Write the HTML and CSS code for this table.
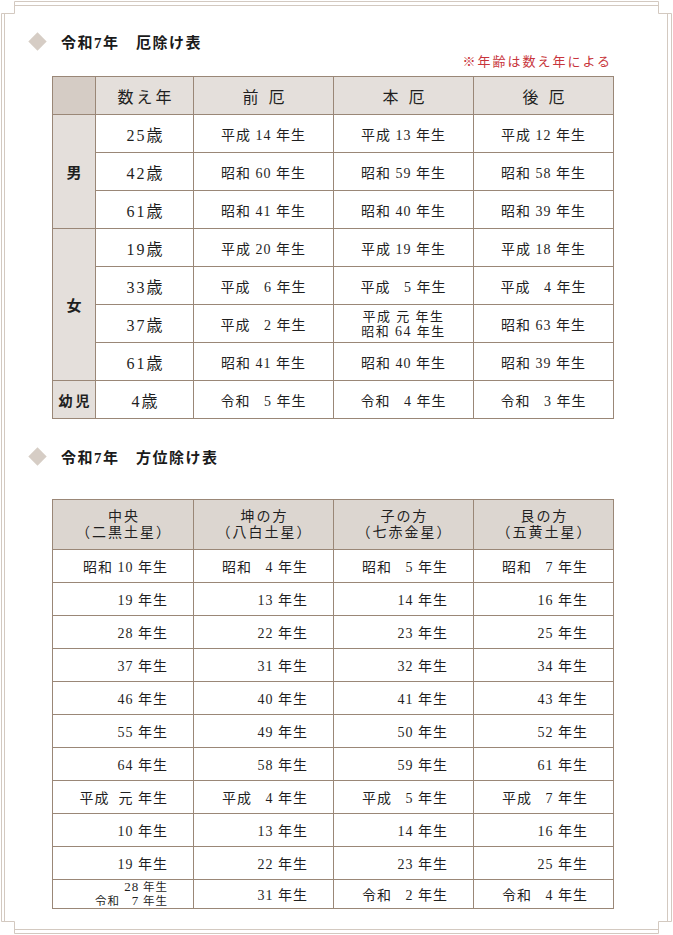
FILE: index.html
```html
<!DOCTYPE html>
<html lang="ja">
<head>
<meta charset="utf-8">
<title>令和7年 厄除け表・方位除け表</title>
<link rel="stylesheet" href="styles.css">
</head>
<body>
<div class="page">
  <svg class="frame" width="673" height="935" viewBox="0 0 673 935" aria-hidden="true">
    <path d="M14.5 1.5 H658.5 V13.5 H671.5 V921.5 H658.5 V933.5 H14.5 V921.5 H1.5 V13.5 H14.5 Z" />
    <path d="M14.5 5.5 H658.5 M4.5 13.5 V921.5 M667.5 13.5 V921.5 M14.5 929.5 H658.5" />
  </svg>

  <h2 class="heading"><span class="diamond"></span><span class="heading-text">令和7年　厄除け表</span></h2>
  <p class="note">※年齢は数え年による</p>

  <table class="yaku">
    <colgroup>
      <col class="c-side"><col class="c-age"><col class="c-y"><col class="c-y"><col class="c-y">
    </colgroup>
    <thead>
      <tr>
        <th class="corner"></th>
        <th><span class="h-age">数え年</span></th>
        <th><span class="h-wide">前厄</span></th>
        <th><span class="h-wide">本厄</span></th>
        <th><span class="h-wide">後厄</span></th>
      </tr>
    </thead>
    <tbody>
      <tr><td class="side" rowspan="3">男</td><td class="age">25歳</td><td>平成 14 年生</td><td>平成 13 年生</td><td>平成 12 年生</td></tr>
      <tr><td class="age">42歳</td><td>昭和 60 年生</td><td>昭和 59 年生</td><td>昭和 58 年生</td></tr>
      <tr><td class="age">61歳</td><td>昭和 41 年生</td><td>昭和 40 年生</td><td>昭和 39 年生</td></tr>
      <tr><td class="side" rowspan="4">女</td><td class="age">19歳</td><td>平成 20 年生</td><td>平成 19 年生</td><td>平成 18 年生</td></tr>
      <tr><td class="age">33歳</td><td>平成 &nbsp;&nbsp;6 年生</td><td>平成 &nbsp;&nbsp;5 年生</td><td>平成 &nbsp;&nbsp;4 年生</td></tr>
      <tr><td class="age">37歳</td><td>平成 &nbsp;&nbsp;2 年生</td><td class="two"><span class="l">平成 元 年生</span><span class="l">昭和 <span class="n">64</span> 年生</span></td><td>昭和 63 年生</td></tr>
      <tr><td class="age">61歳</td><td>昭和 41 年生</td><td>昭和 40 年生</td><td>昭和 39 年生</td></tr>
      <tr><td class="side small">幼児</td><td class="age">4歳</td><td>令和 &nbsp;&nbsp;5 年生</td><td>令和 &nbsp;&nbsp;4 年生</td><td>令和 &nbsp;&nbsp;3 年生</td></tr>
    </tbody>
  </table>

  <h2 class="heading second"><span class="diamond"></span><span class="heading-text">令和7年　方位除け表</span></h2>

  <table class="houi">
    <colgroup>
      <col class="c-h1"><col class="c-h"><col class="c-h"><col class="c-h">
    </colgroup>
    <thead>
      <tr>
        <th><span class="l">中央</span><span class="l paren">（二黒土星）</span></th>
        <th><span class="l">坤の方</span><span class="l paren">（八白土星）</span></th>
        <th><span class="l">子の方</span><span class="l paren">（七赤金星）</span></th>
        <th><span class="l">艮の方</span><span class="l paren">（五黄土星）</span></th>
      </tr>
    </thead>
    <tbody>
      <tr><td>昭和 10 年生</td><td>昭和 &nbsp;&nbsp;4 年生</td><td>昭和 &nbsp;&nbsp;5 年生</td><td>昭和 &nbsp;&nbsp;7 年生</td></tr>
      <tr><td>19 年生</td><td>13 年生</td><td>14 年生</td><td>16 年生</td></tr>
      <tr><td>28 年生</td><td>22 年生</td><td>23 年生</td><td>25 年生</td></tr>
      <tr><td>37 年生</td><td>31 年生</td><td>32 年生</td><td>34 年生</td></tr>
      <tr><td>46 年生</td><td>40 年生</td><td>41 年生</td><td>43 年生</td></tr>
      <tr><td>55 年生</td><td>49 年生</td><td>50 年生</td><td>52 年生</td></tr>
      <tr><td>64 年生</td><td>58 年生</td><td>59 年生</td><td>61 年生</td></tr>
      <tr><td>平成 &nbsp;元 年生</td><td>平成 &nbsp;&nbsp;4 年生</td><td>平成 &nbsp;&nbsp;5 年生</td><td>平成 &nbsp;&nbsp;7 年生</td></tr>
      <tr><td>10 年生</td><td>13 年生</td><td>14 年生</td><td>16 年生</td></tr>
      <tr><td>19 年生</td><td>22 年生</td><td>23 年生</td><td>25 年生</td></tr>
      <tr class="last"><td class="two"><span class="l"><span class="n">28</span> 年生</span><span class="l">令和 &nbsp;&nbsp;<span class="n">7</span> 年生</span></td><td>31 年生</td><td>令和 &nbsp;&nbsp;2 年生</td><td>令和 &nbsp;&nbsp;4 年生</td></tr>
    </tbody>
  </table>
</div>
</body>
</html>
```

FILE: styles.css
```css
html, body {
  margin: 0;
  padding: 0;
  background: #ffffff;
}

body {
  font-family: "Liberation Serif", "Noto Sans CJK JP", serif;
  color: #1f1f1f;
}

.page {
  position: relative;
  width: 673px;
  height: 935px;
  padding-top: 34px;
  box-sizing: border-box;
  overflow: hidden;
}

.frame {
  position: absolute;
  left: 0;
  top: 0;
  pointer-events: none;
}

.frame path {
  fill: none;
  stroke: #d3c9c0;
  stroke-width: 1;
}

.heading {
  display: flex;
  align-items: center;
  margin: 0;
  height: 18px;
  font-size: 15px;
  font-weight: bold;
  letter-spacing: 1.5px;
  line-height: 18px;
  color: #1a1a1a;
}

.heading.second {
  margin-top: 30px;
}

.diamond {
  width: 13px;
  height: 13px;
  margin-left: 31px;
  margin-right: 17px;
  margin-top: -3px;
  background: #d6cdc5;
  transform: rotate(45deg);
  flex: none;
}

.note {
  margin: 3px 0 0 0;
  width: 612px;
  text-align: right;
  font-size: 13px;
  line-height: 14px;
  letter-spacing: 2px;
  color: #c8353b;
}

table {
  border-collapse: collapse;
  table-layout: fixed;
  margin-left: 52px;
  width: 561px;
}

th, td {
  border: 1px solid #9a8777;
  padding: 0;
  font-weight: normal;
}

/* 厄除け表 */
.yaku {
  margin-top: 7px;
}

.yaku .c-side { width: 43px; }
.yaku .c-age { width: 98px; }
.yaku .c-y { width: 140px; }

.yaku tr {
  height: 38px;
}

.yaku th {
  background: #e4dfdb;
  font-size: 16px;
  text-align: center;
}

.yaku th.corner {
  background: #d5ccc5;
}

.h-age {
  letter-spacing: 3px;
  padding-left: 3px;
}

.h-wide {
  letter-spacing: 10px;
  padding-left: 10px;
}

.yaku td {
  text-align: center;
  font-size: 14px;
  letter-spacing: 1px;
}

.yaku td.side {
  background: #e4dfdb;
  font-size: 15px;
  font-weight: bold;
  letter-spacing: 0;
}

.yaku td.side.small {
  font-size: 14px;
  letter-spacing: 3px;
  padding-left: 3px;
}

.yaku td.age {
  font-size: 16px;
  letter-spacing: 2px;
  padding-left: 2px;
}

.yaku td.two {
  font-size: 13px;
  line-height: 15px;
  letter-spacing: 1.5px;
}

.l {
  display: block;
}

.n {
  font-size: 14px;
  line-height: 1;
}

/* 方位除け表 */
.houi {
  margin-top: 32px;
}

.houi .c-h1 { width: 141px; }
.houi .c-h { width: 140px; }

.houi thead tr {
  height: 50px;
}

.houi th {
  background: #dcd6d0;
  font-size: 14px;
  line-height: 16px;
  letter-spacing: 2px;
  text-align: center;
  padding-left: 2px;
}

.houi tbody tr {
  height: 33px;
}

.houi tbody tr.last {
  height: 28px;
}

.houi td {
  text-align: right;
  padding-right: 25px;
  font-size: 14px;
  letter-spacing: 1px;
}

.houi td.two {
  font-size: 11.5px;
  line-height: 14px;
}

.houi td.two .l {
  height: 14px;
}

.houi td.two .n {
  font-size: 13px;
}
```
